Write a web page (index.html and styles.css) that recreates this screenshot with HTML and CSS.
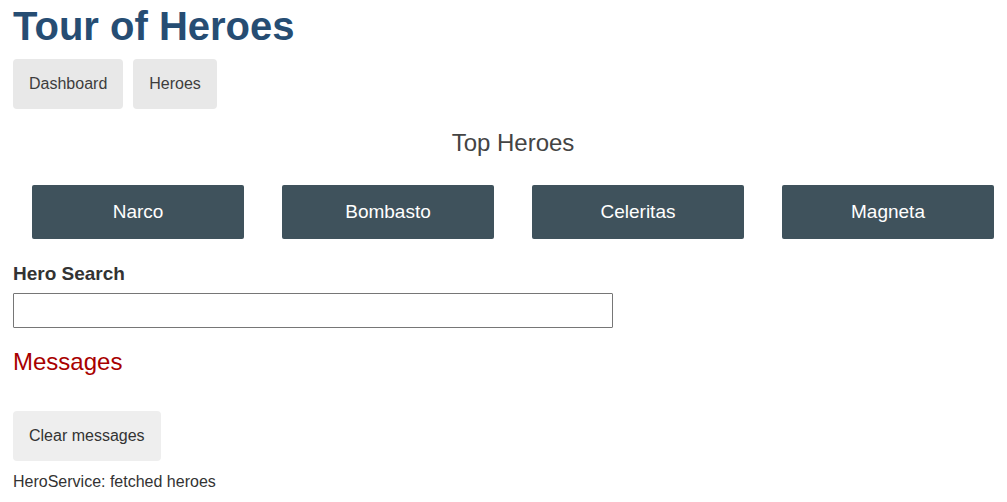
FILE: index.html
```html
<!DOCTYPE html>
<html lang="en">
<head>
<meta charset="utf-8">
<title>Tour of Heroes</title>
<link rel="stylesheet" href="styles.css">
</head>
<body>
<h1 class="title">Tour of Heroes</h1>
<nav class="nav">
  <a class="nav-link" href="#dashboard">Dashboard</a>
  <a class="nav-link" href="#heroes">Heroes</a>
</nav>
<main>
  <h2 class="top-title">Top Heroes</h2>
  <div class="heroes-menu">
    <a class="hero" href="#narco">Narco</a>
    <a class="hero" href="#bombasto">Bombasto</a>
    <a class="hero" href="#celeritas">Celeritas</a>
    <a class="hero" href="#magneta">Magneta</a>
  </div>
  <div class="search">
    <label class="search-label" for="search-box">Hero Search</label>
    <input class="search-box" id="search-box" type="text">
  </div>
</main>
<section class="messages">
  <h2 class="messages-title">Messages</h2>
  <button class="clear" type="button">Clear messages</button>
  <div class="message">HeroService: fetched heroes</div>
</section>
</body>
</html>
```

FILE: styles.css
```css
* {
  box-sizing: border-box;
}

body {
  margin: 0;
  padding: 2px 13px 8px;
  background: #fff;
  color: #333;
  font-family: "Liberation Sans", Arial, sans-serif;
  font-size: 16px;
}

.title {
  margin: 0 0 9px;
  color: #264d73;
  font-size: 40px;
  line-height: 48px;
}

.nav {
  display: flex;
  gap: 10px;
}

.nav-link {
  padding: 16px;
  border-radius: 4px;
  background: #e8e8e8;
  color: #3d3d3d;
  line-height: 18px;
  text-decoration: none;
}

.top-title {
  margin: 20px 0 28px;
  padding-left: 19px;
  color: #444;
  font-size: 24px;
  font-weight: normal;
  line-height: 28px;
  text-align: center;
}

.heroes-menu {
  display: grid;
  grid-template-columns: repeat(4, 1fr);
  gap: 38px;
  padding-left: 19px;
}

.hero {
  padding: 16px;
  border-radius: 2px;
  background: #3f525c;
  color: #fff;
  font-size: 19px;
  line-height: 22px;
  text-align: center;
  text-decoration: none;
}

.search {
  display: flex;
  flex-direction: column;
  gap: 8px;
  margin-top: 24px;
}

.search-label {
  color: #333;
  font-size: 19px;
  font-weight: bold;
  line-height: 22px;
}

.search-box {
  width: 100%;
  max-width: 600px;
  padding: 8px;
  border: 1px solid #767676;
  border-radius: 1px;
  font: inherit;
  line-height: 17px;
}

.messages-title {
  margin: 20px 0 35px;
  color: #a80000;
  font-size: 24px;
  font-weight: normal;
  line-height: 28px;
}

.clear {
  padding: 16px;
  border: 0;
  border-radius: 4px;
  background: #eee;
  color: #333;
  font: inherit;
  line-height: 18px;
}

.message {
  margin-top: 12px;
  line-height: 18px;
}
```
